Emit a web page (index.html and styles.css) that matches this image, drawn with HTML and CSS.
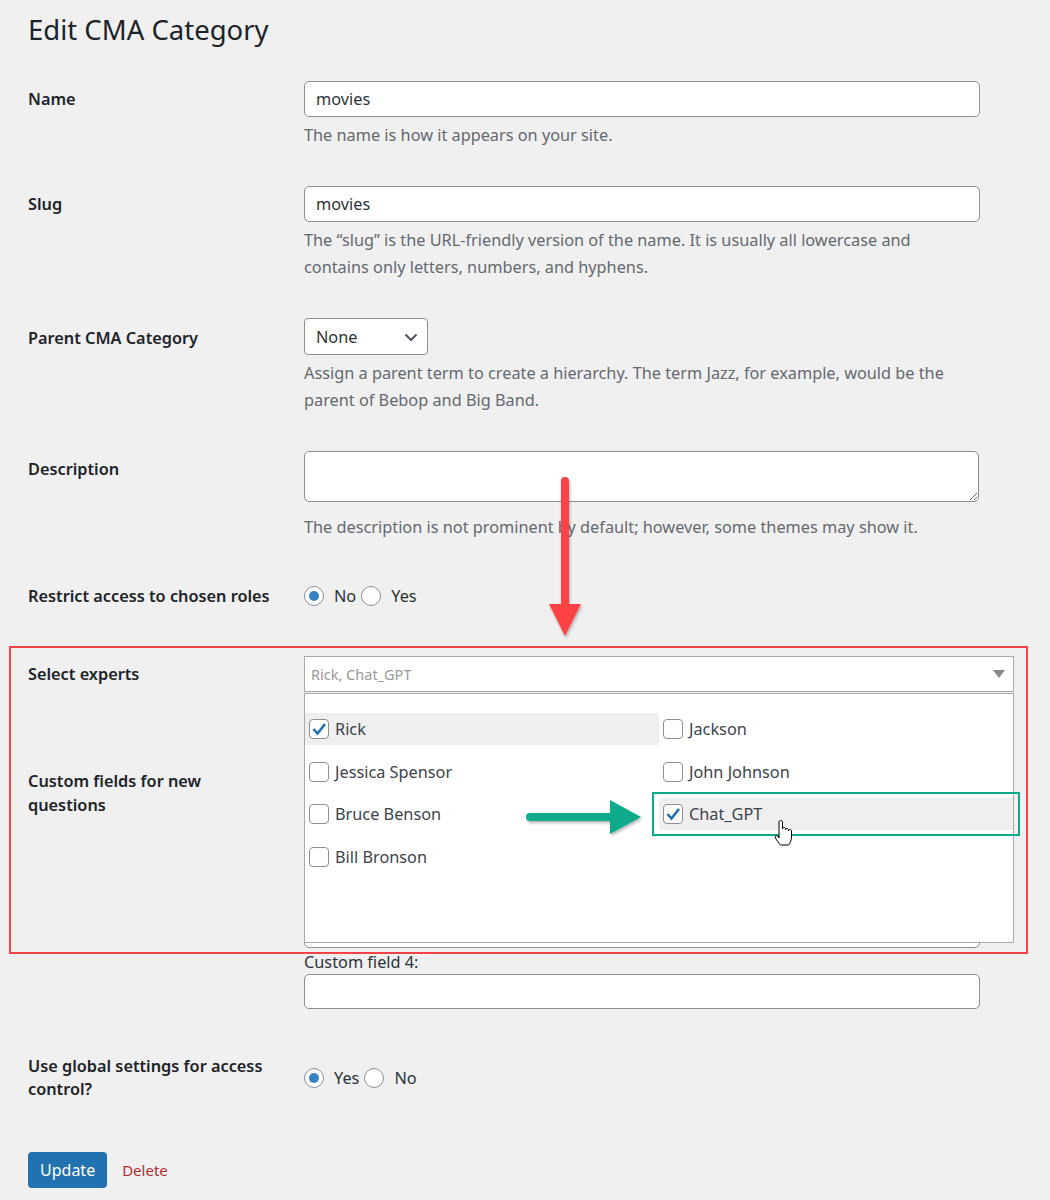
FILE: index.html
```html
<!DOCTYPE html>
<html lang="en">

<head>
    <meta charset="UTF-8">
    <meta name="viewport" content="width=device-width, initial-scale=1.0">
    <title>Edit CMA Category</title>
    <link rel="stylesheet" href="styles.css">
</head>

<body>
    <div class="wrap">
        <h1>Edit CMA Category</h1>

        <form class="form-table">
            <div class="row">
                <label class="row-label" for="tag-name">Name</label>
                <div class="row-field">
                    <input class="text" id="tag-name" type="text" value="movies">
                    <p class="description">The name is how it appears on your site.</p>
                </div>
            </div>

            <div class="row">
                <label class="row-label" for="slug">Slug</label>
                <div class="row-field">
                    <input class="text" id="slug" type="text" value="movies">
                    <p class="description">The “slug” is the URL-friendly version of the name. It is usually all lowercase and contains only letters, numbers, and hyphens.</p>
                </div>
            </div>

            <div class="row">
                <label class="row-label label-parent" for="parent">Parent CMA Category</label>
                <div class="row-field">
                    <div class="select-wrap">
                        <select id="parent" class="postform">
                            <option>None</option>
                        </select>
                        <svg class="select-arrow" width="14" height="10" viewBox="0 0 14 10"><path d="M1.5 2.5 L7 8 L12.5 2.5" fill="none" stroke="#50575e" stroke-width="2"/></svg>
                    </div>
                    <p class="description">Assign a parent term to create a hierarchy. The term Jazz, for example, would be the parent of Bebop and Big Band.</p>
                </div>
            </div>

            <div class="row">
                <label class="row-label" for="description">Description</label>
                <div class="row-field">
                    <textarea id="description" class="desc-area"></textarea>
                    <p class="description">The description is not prominent by default; however, some themes may show it.</p>
                </div>
            </div>

            <div class="row row-radio">
                <span class="row-label">Restrict access to chosen roles</span>
                <div class="row-field radios">
                    <label><input type="radio" name="restrict" checked> No</label>
                    <label><input type="radio" name="restrict"> Yes</label>
                </div>
            </div>

            <div class="row row-experts">
                <span class="row-label">Select experts</span>
                <div class="row-field">
                    <div class="chosen">
                        <div class="chosen-single">
                            <span>Rick, Chat_GPT</span>
                            <span class="chosen-caret"></span>
                        </div>
                        <div class="chosen-drop">
                            <ul class="expert-list">
                                <li class="is-hover"><span class="box"><svg width="16" height="16" viewBox="0 0 16 16"><path d="M2.5 8 L6.5 12.5 L14 3" fill="none" stroke="#2271b1" stroke-width="2.6"/></svg></span>Rick</li>
                                <li><span class="box"></span>Jackson</li>
                                <li><span class="box"></span>Jessica Spensor</li>
                                <li><span class="box"></span>John Johnson</li>
                                <li><span class="box"></span>Bruce Benson</li>
                                <li class="is-hover"><span class="box"><svg width="16" height="16" viewBox="0 0 16 16"><path d="M2.5 8 L6.5 12.5 L14 3" fill="none" stroke="#2271b1" stroke-width="2.6"/></svg></span>Chat_GPT</li>
                                <li><span class="box"></span>Bill Bronson</li>
                            </ul>
                        </div>
                    </div>
                </div>
            </div>

            <div class="row row-custom">
                <span class="row-label label-custom">Custom fields for new questions</span>
                <div class="row-field">
                    <div class="covered">
                        <div class="covered-area"></div>
                    </div>
                    <label class="field-label" for="cf4">Custom field 4:</label>
                    <input class="text cf-input" id="cf4" type="text">
                </div>
            </div>

            <div class="row row-global">
                <span class="row-label">Use global settings for access control?</span>
                <div class="row-field radios">
                    <label><input type="radio" name="global" checked> Yes</label>
                    <label><input type="radio" name="global"> No</label>
                </div>
            </div>

            <div class="submit">
                <button type="button" class="button-primary">Update</button>
                <a href="#" class="delete">Delete</a>
            </div>
        </form>
    </div>

    <!-- screenshot annotations -->
    <div class="mark-red"></div>
    <div class="mark-green"></div>
    <svg class="arrows" width="1050" height="1200" viewBox="0 0 1050 1200">
        <defs>
            <filter id="shadow" x="-20%" y="-20%" width="140%" height="140%">
                <feDropShadow dx="1" dy="2" stdDeviation="1.5" flood-color="#000" flood-opacity="0.3"/>
            </filter>
        </defs>
        <g filter="url(#shadow)">
            <line x1="565" y1="481" x2="565" y2="608" stroke="#fd4345" stroke-width="8" stroke-linecap="round"/>
            <polygon points="549,604 581,604 565,636" fill="#fd4345"/>
            <line x1="530" y1="817" x2="614" y2="817" stroke="#0aab8b" stroke-width="8" stroke-linecap="round"/>
            <polygon points="610,800 610,834 641,817" fill="#0aab8b"/>
        </g>
        <path class="hand" d="M779 822 c0-2 3.5-2 3.5 0 v7 c0-2 3-2 3 0 v1 c0-2 3-2 3 0 v1 c0-2 3-2 3 0 v6 c0 4-2 7-3 8 h-8 c-1-1-4-5-5-7 c-1-2 1-3 2-2 l1.5 2 z" fill="#fff" stroke="#000" stroke-width="1"/>
    </svg>
</body>

</html>
```

FILE: styles.css
```css
body {
    margin: 0;
    background-color: #f0f0f1;
    font-family: "Noto Sans", sans-serif;
    font-size: 16.3px;
    color: #1d2327;
    position: relative;
    min-height: 1200px;
}

.wrap {
    padding: 0 0 0 28px;
}

h1 {
    margin: 0;
    padding-top: 11px;
    font-size: 27.5px;
    font-weight: 400;
    line-height: 38px;
}

.form-table {
    margin-top: 14px;
}

.row {
    display: flex;
    padding: 18px 0 19px;
}

.row-label {
    width: 250px;
    padding-right: 26px;
    flex-shrink: 0;
    font-weight: 600;
    line-height: 37px;
}

.label-parent {
    padding-top: 2px;
}

.row-field {
    width: 710px;
}

.text {
    box-sizing: border-box;
    width: 676px;
    height: 36px;
    margin: 0;
    padding: 0 11px;
    border: 1px solid #8c8f94;
    border-radius: 5px;
    background: #fff;
    font-family: inherit;
    font-size: 16.3px;
    color: #2c3338;
    display: block;
}

.description {
    margin: 5px 0 0;
    width: 660px;
    line-height: 27px;
    color: #646970;
}

.select-wrap {
    position: relative;
    width: 124px;
}

.postform {
    appearance: none;
    box-sizing: border-box;
    width: 124px;
    height: 37px;
    margin: 0;
    padding: 0 11px;
    border: 1px solid #8c8f94;
    border-radius: 4px;
    background: #fff;
    font-family: inherit;
    font-size: 16.3px;
    color: #2c3338;
    display: block;
}

.select-arrow {
    position: absolute;
    right: 10px;
    top: 14px;
}

.desc-area {
    box-sizing: border-box;
    display: block;
    width: 675px;
    height: 51px;
    margin: 0 0 12px;
    border: 1px solid #8c8f94;
    border-radius: 5px;
    background: #fff;
    resize: vertical;
}

.desc-area + .description {
    margin-top: 0;
}

.row-radio {
    padding-top: 16px;
}

.row-radio .row-label,
.row-radio .radios {
    line-height: 40px;
}

.radios {
    display: flex;
    align-items: center;
    color: #2c3338;
}

.radios label {
    display: flex;
    align-items: center;
    gap: 10px;
    margin-right: 5px;
}

.radios input {
    appearance: none;
    margin: 0;
    width: 20px;
    height: 20px;
    border: 1px solid #8c8f94;
    border-radius: 50%;
    background: #fff;
    position: relative;
}

.radios input:checked::before {
    content: "";
    position: absolute;
    inset: 4px;
    border-radius: 50%;
    background: #3582c4;
}

.row-experts {
    padding-top: 21px;
}

.chosen {
    position: relative;
    width: 710px;
}

.chosen-single {
    box-sizing: border-box;
    height: 36px;
    border: 1px solid #aaa;
    background: #fff;
    padding: 0 6px;
    display: flex;
    align-items: center;
    justify-content: space-between;
    font-size: 14.5px;
    color: #999;
}

.chosen-caret {
    width: 0;
    height: 0;
    border-left: 6px solid transparent;
    border-right: 6px solid transparent;
    border-top: 8px solid #888;
    margin-right: 2px;
}

.chosen-drop {
    position: absolute;
    z-index: 2;
    top: 37px;
    left: 0;
    right: 0;
    box-sizing: border-box;
    height: 250px;
    border: 1px solid #aaa;
    background: #fff;
}

.expert-list {
    margin: 0;
    padding: 19px 0 0;
    list-style: none;
    display: grid;
    grid-template-columns: 354px 354px;
    row-gap: 10.5px;
}

.expert-list li {
    height: 32px;
    display: flex;
    align-items: center;
    padding-left: 4px;
    color: #3c434a;
}

.expert-list li.is-hover {
    background: #efefef;
}

.box {
    box-sizing: border-box;
    width: 20px;
    height: 20px;
    margin-right: 6px;
    border: 1px solid #8c8f94;
    border-radius: 4px;
    background: #fff;
    display: flex;
    align-items: center;
    justify-content: center;
}

.row-custom {
    padding-top: 0;
}

.label-custom {
    padding-top: 57px;
    line-height: 24px;
}

.covered {
    height: 236px;
    display: flex;
    align-items: flex-end;
}

.covered-area {
    box-sizing: border-box;
    width: 676px;
    height: 60px;
    border: 1px solid #8c8f94;
    border-radius: 5px;
    background: #fff;
}

.field-label {
    display: block;
    margin-top: 2px;
    line-height: 24px;
    color: #2c3338;
}

.cf-input {
    height: 35px;
    margin-top: 0;
}

.row-global {
    padding-top: 27px;
}

.row-global .row-label {
    line-height: 23px;
}

.row-global .radios {
    height: 46px;
}

.submit {
    margin-top: 32px;
    display: flex;
    align-items: center;
    gap: 15px;
}

.button-primary {
    height: 36px;
    padding: 0 12px;
    border: none;
    border-radius: 4px;
    background-color: #2271b1;
    color: #fff;
    font-family: inherit;
    font-size: 16px;
    cursor: pointer;
}

.delete {
    color: #b32d2e;
    text-decoration: none;
    font-size: 15px;
}

.mark-red {
    position: absolute;
    left: 9px;
    top: 646px;
    width: 1015px;
    height: 304px;
    border: 2px solid #fd4345;
    z-index: 3;
}

.mark-green {
    position: absolute;
    left: 652px;
    top: 792px;
    width: 364px;
    height: 40px;
    border: 2px solid #0aab8b;
    z-index: 3;
}

.arrows {
    position: absolute;
    left: 0;
    top: 0;
    z-index: 4;
    pointer-events: none;
}
```
